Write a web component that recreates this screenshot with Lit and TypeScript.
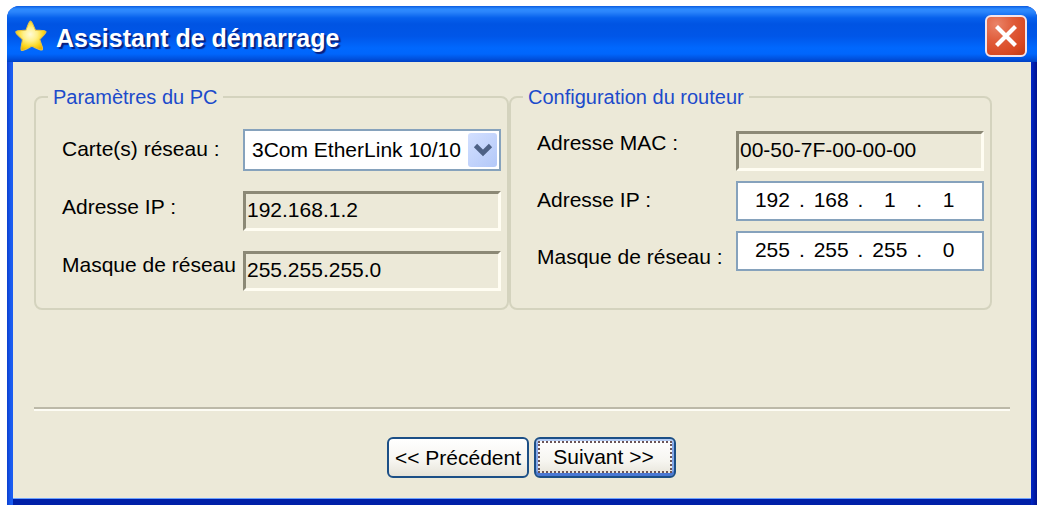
import { LitElement, html, css, svg } from "lit";
import { customElement } from "lit/decorators.js";

const star = svg`
  <defs>
    <radialGradient id="glow" cx="0.48" cy="0.45" r="0.58">
      <stop offset="0" stop-color="#fffbd8" />
      <stop offset="0.4" stop-color="#fff08a" />
      <stop offset="0.75" stop-color="#fcd71c" />
      <stop offset="1" stop-color="#eeb400" />
    </radialGradient>
  </defs>
  <path
    d="M15 1 C16.5 1 18.5 7 19.8 9.8 C23 10.2 29 9.6 30 11.2 C30.6 12.8 25.6 16.6 24 18.8 C24.6 22 28 27.6 26.4 29 C25 30 19.4 26.6 16.4 25.4 C13 27 8 30.4 6.2 29.4 C4.8 28 7 22.4 7.2 19 C5 16.4 0.4 13.4 0.8 11.4 C1.6 9.8 7.4 10.6 10.6 9.8 C12 7 13.2 1.4 15 1 Z"
    fill="url(#glow)" stroke="#e3c04a" stroke-width="1" stroke-linejoin="round" />`;

@customElement("app-root")
export class AppRoot extends LitElement {
  static styles = css`
    :host {
      display: block;
      background: #fff;
      padding: 6px 0 2px 7px;
      font-family: "Liberation Sans", Arial, sans-serif;
      font-size: 21px;
      line-height: 24px;
      color: #000;
    }
    * {
      box-sizing: border-box;
    }
    .window {
      border-radius: 12px 12px 0 0;
      background: linear-gradient(90deg, #0a3fd0 0, #1a5cf0 4px, #1a5cf0 50%, #0024c0 calc(100% - 5px), #00128c 100%);
      overflow: hidden;
    }
    .titlebar {
      display: flex;
      align-items: center;
      height: 56px;
      padding: 4px 10px 0 8px;
      gap: 9px;
      background: linear-gradient(#0a5ce0 0, #2f8cff 3px, #2a84fb 6px, #0660ec 12px, #0054e3 18px, #0056e8 30px, #0068fe 42px, #0066fc 48px, #0050dc 53px, #0040c4 56px);
    }
    .star {
      width: 32px;
      height: 32px;
      flex: none;
    }
    .title {
      flex: 1;
      margin: 0;
      padding-top: 4px;
      font-size: 25px;
      line-height: 30px;
      font-weight: bold;
      color: #fff;
      text-shadow: 2px 2px 1px #0a1f7c;
    }
    .close {
      display: grid;
      place-items: center;
      width: 42px;
      height: 42px;
      padding: 0;
      border: 2px solid #f4e4ea;
      border-radius: 6px;
      background: radial-gradient(circle at 25% 20%, #ea8468 0, #e05c3a 40%, #d84822 75%, #c03a12 100%);
    }
    .body {
      margin: 0 6px 7px;
      padding: 23px 21px 20px;
      background: #ece9d8;
      box-shadow: 0 1px 0 #6ea4ff, 0 7px 0 #0020a8;
    }
    .groups {
      display: grid;
      grid-template-columns: 475fr 483fr;
      padding-right: 18px;
    }
    fieldset {
      min-width: 0;
      margin: 0;
      padding: 0 6px 17px 26px;
      border: 2px solid #d4d3be;
      border-radius: 8px;
    }
    legend {
      margin-left: -14px;
      padding: 0 5px;
      font-size: 20px;
      color: #1c4bcb;
    }
    .columns {
      display: grid;
    }
    .pc .columns {
      grid-template-columns: 181fr 258fr;
      padding-top: 20px;
    }
    .router .columns {
      grid-template-columns: 199fr 248fr;
      padding-top: 22px;
    }
    .labels,
    .fields {
      display: flex;
      flex-direction: column;
      min-width: 0;
    }
    .labels {
      align-items: flex-start;
      gap: 34px;
      white-space: nowrap;
    }
    .pc .labels {
      padding-top: 8px;
    }
    .router .labels {
      gap: 33px;
    }
    .pc .fields {
      gap: 20px;
    }
    .router .fields {
      gap: 10px;
    }
    input,
    select,
    button {
      font: inherit;
      color: inherit;
    }
    .readonly {
      width: 100%;
      height: 40px;
      padding: 0 0 3px 1px;
      border: 3px solid;
      border-color: #8c8976 #fffdf2 #fffdf2 #8c8976;
      background: #ece9d8;
      outline: none;
    }
    .combo {
      position: relative;
    }
    .combo select {
      display: block;
      appearance: none;
      width: 100%;
      height: 42px;
      padding: 0 34px 0 7px;
      border: 2px solid #86a2bc;
      border-radius: 0;
      background: #fff;
    }
    .arrow {
      position: absolute;
      top: 4px;
      right: 4px;
      bottom: 4px;
      width: 29px;
      display: grid;
      place-items: center;
      border-radius: 3px;
      background: linear-gradient(135deg, #d3e0ff, #b3c8f8);
      pointer-events: none;
    }
    .ip {
      display: flex;
      align-items: center;
      height: 40px;
      padding: 0 7px 2px 8px;
      border: 2px solid #86a2bc;
      background: #fff;
    }
    .ip input {
      flex: 1;
      width: 0;
      min-width: 0;
      padding: 0;
      border: 0;
      background: none;
      text-align: center;
      outline: none;
    }
    .divider {
      height: 4px;
      margin: 97px 0 26px;
      border: 0;
      border-top: 2px solid #bcb9a8;
      border-bottom: 2px solid #fdfcf4;
    }
    .actions {
      display: flex;
      justify-content: center;
      gap: 5px;
      padding-left: 19px;
    }
    .btn {
      width: 142px;
      height: 41px;
      padding: 0;
      border: 2px solid #1c4f86;
      border-radius: 6px;
      background: linear-gradient(#fff, #f6f5f0 60%, #e6e3d8);
      white-space: nowrap;
    }
    .primary {
      padding: 2px 2px 3px;
      box-shadow: inset 0 2px 0 #b4ccf4, inset 0 -3px 0 #4a78d4, inset 2px 0 0 #86a8e8, inset -2px 0 0 #86a8e8;
    }
    .focus {
      display: grid;
      place-items: center;
      height: 100%;
      border: 2px dotted #6a5458;
      padding-right: 3px;
    }
  `;

  private address(id: string, name: string, parts: string[]) {
    return html`<div class="ip" role="group" aria-label=${name}>
      ${parts.map(
        (part, i) => html`${i ? html`<span>.</span>` : ""}<input
            id=${i ? `${id}-${i}` : id}
            aria-label=${`${name} ${i + 1}`}
            maxlength="3"
            inputmode="numeric"
            .value=${part}
          />`
      )}
    </div>`;
  }

  render() {
    return html`
      <main class="window">
        <header class="titlebar">
          <svg class="star" viewBox="0 0 31 31" aria-hidden="true">${star}</svg>
          <h1 class="title">Assistant de démarrage</h1>
          <button class="close" aria-label="Fermer">
            <svg width="26" height="26" viewBox="0 0 26 26" aria-hidden="true">
              <path d="M3.5 3.5 L22.5 22.5 M22.5 3.5 L3.5 22.5" stroke="#fff" stroke-width="4.2" />
            </svg>
          </button>
        </header>
        <form class="body" @submit=${(e: Event) => e.preventDefault()}>
          <div class="groups">
            <fieldset class="pc">
              <legend>Paramètres du PC</legend>
              <div class="columns">
                <div class="labels">
                  <label for="card">Carte(s) réseau :</label>
                  <label for="pc-ip">Adresse IP :</label>
                  <label for="pc-mask">Masque de réseau</label>
                </div>
                <div class="fields">
                  <div class="combo">
                    <select id="card">
                      <option>3Com EtherLink 10/10</option>
                    </select>
                    <span class="arrow">
                      <svg width="20" height="16" viewBox="0 0 20 16" aria-hidden="true">
                        <path d="M2.5 3.5 L10 11 L17.5 3.5" fill="none" stroke="#4d6185" stroke-width="4.6" />
                      </svg>
                    </span>
                  </div>
                  <input class="readonly" id="pc-ip" readonly value="192.168.1.2" />
                  <input class="readonly" id="pc-mask" readonly value="255.255.255.0" />
                </div>
              </div>
            </fieldset>
            <fieldset class="router">
              <legend>Configuration du routeur</legend>
              <div class="columns">
                <div class="labels">
                  <label for="mac">Adresse MAC :</label>
                  <label for="router-ip">Adresse IP :</label>
                  <label for="router-mask">Masque de réseau :</label>
                </div>
                <div class="fields">
                  <input class="readonly" id="mac" readonly value="00-50-7F-00-00-00" />
                  ${this.address("router-ip", "Adresse IP", ["192", "168", "1", "1"])}
                  ${this.address("router-mask", "Masque de réseau", ["255", "255", "255", "0"])}
                </div>
              </div>
            </fieldset>
          </div>
          <hr class="divider" />
          <div class="actions">
            <button class="btn" type="button">&lt;&lt; Précédent</button>
            <button class="btn primary" type="submit"><span class="focus">Suivant &gt;&gt;</span></button>
          </div>
        </form>
      </main>
    `;
  }
}
